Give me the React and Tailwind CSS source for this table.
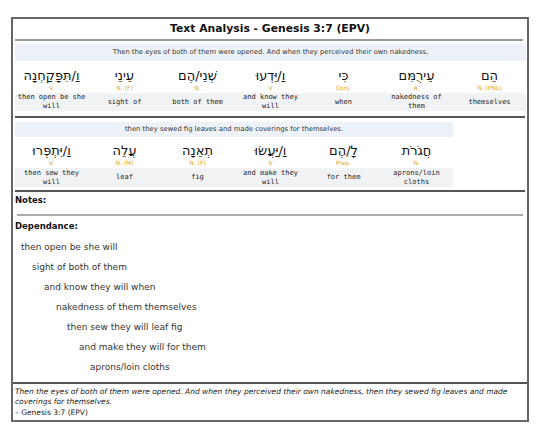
const row1 = [
  { he: "וַ/תִּפָּקַחְנָה", pos: "V.", gloss: "then open be she will" },
  { he: "עֵינֵי", pos: "N. (F)", gloss: "sight of" },
  { he: "שְׁנֵי/הֶם", pos: "N.", gloss: "both of them" },
  { he: "וַ/יֵּדְעוּ", pos: "V", gloss: "and know they will" },
  { he: "כִּי", pos: "Conj.", gloss: "when" },
  { he: "עֵירֻמִּם", pos: "A.", gloss: "nakedness of them" },
  { he: "הֵם", pos: "N. (PNL)", gloss: "themselves" },
];

const row2 = [
  { he: "וַ/יִּתְפְּרוּ", pos: "V.", gloss: "then sew they will" },
  { he: "עֲלֵה", pos: "N. (M)", gloss: "leaf" },
  { he: "תְאֵנָה", pos: "N. (F)", gloss: "fig" },
  { he: "וַ/יַּעֲשׂוּ", pos: "V", gloss: "and make they will" },
  { he: "לָ/הֶם", pos: "Prep.", gloss: "for them" },
  { he: "חֲגֹרֹת", pos: "N.", gloss: "aprons/loin cloths" },
];

const deps = [
  { text: "then open be she will", cls: "pl-[6px]" },
  { text: "sight of both of them", cls: "pl-[17px]" },
  { text: "and know they will when", cls: "pl-[29px]" },
  { text: "nakedness of them themselves", cls: "pl-[41px]" },
  { text: "then sew they will leaf fig", cls: "pl-[52px]" },
  { text: "and make they will for them", cls: "pl-[64px]" },
  { text: "aprons/loin cloths", cls: "pl-[75px]" },
];

// pad: outer padding, verseH: verse band height, hebH: hebrew line height
const WordRow = ({ verse, words, width, pad, verseH, hebH, glossH }) => (
  <div className={`border-b-2 border-[#555] ${pad}`}>
    <div className={`${width} flex flex-col`}>
      <div className={`${verseH} bg-[#edf2f8] flex items-center justify-center text-[6.8px] text-[#333]`}>
        {verse}
      </div>
      <div className="flex">
        {words.map((w, i) => (
          <div key={i} className="w-[73px] flex flex-col items-center">
            <div
              dir="rtl"
              className={`${hebH} flex items-end text-[13px] leading-none text-[#111]`}
            >
              {w.he}
            </div>
            <div className="h-[11px] flex items-center text-[6px] text-[#d9a62c]">
              {w.pos}
            </div>
          </div>
        ))}
      </div>
      <div className="flex bg-[#f1f2f4]">
        {words.map((w, i) => (
          <div
            key={i}
            className={`w-[73px] px-[1px] ${glossH} flex items-center justify-center text-center font-['DejaVu_Sans_Mono',monospace] text-[7px] leading-[9px] text-[#222]`}
          >
            {w.gloss}
          </div>
        ))}
      </div>
    </div>
  </div>
);

export default function App() {
  return (
    <div className="bg-white px-[11px] pt-[17px] font-['DejaVu_Sans',sans-serif] text-[#222]">
      <div className="w-[518px] h-[405px] border-2 border-[#666] flex flex-col">
        <div className="px-[2px]">
          <div className="h-[20px] flex items-center justify-center text-[10.8px] font-bold text-[#111]">
            Text Analysis - Genesis 3:7 (EPV)
          </div>
          <div className="h-[2px] bg-[#999] mr-[2px]" />
          <WordRow
            verse="Then the eyes of both of them were opened. And when they perceived their own nakedness,"
            words={row1}
            width="w-[511px]"
            pad="pt-[3px] pb-[5px]"
            verseH="h-[17px]"
            hebH="h-[21px]"
            glossH="h-[18px]"
          />
          <WordRow
            verse="then they sewed fig leaves and made coverings for themselves."
            words={row2}
            width="w-[438px]"
            pad="pt-[4px] pb-[3px]"
            verseH="h-[15px]"
            hebH="h-[20px]"
            glossH="h-[19px]"
          />
        </div>
        <div className="px-[2px] flex-1">
          <div className="h-[16px] flex items-center text-[8.5px] font-bold text-[#111]">Notes:</div>
          <div className="h-[2px] bg-[#aaa] mx-[2px] mt-[6px]" />
          <div className="h-[21px] flex items-center text-[8.5px] font-bold text-[#111]">Dependance:</div>
          <div className="flex flex-col mt-[1px]">
            {deps.map((d, i) => (
              <div key={i} className={`${d.cls} h-[20px] flex items-center text-[9px] text-[#333]`}>
                {d.text}
              </div>
            ))}
          </div>
        </div>
        <div className="border-t-2 border-[#555] px-[2px] pt-[3px] pb-[2px] text-[7.5px] leading-[10.5px] text-[#222]">
          <div className="italic">
            Then the eyes of both of them were opened. And when they perceived their own nakedness, then they sewed fig leaves and made coverings for themselves.
          </div>
          <div>– Genesis 3:7 (EPV)</div>
        </div>
      </div>
    </div>
  );
}
